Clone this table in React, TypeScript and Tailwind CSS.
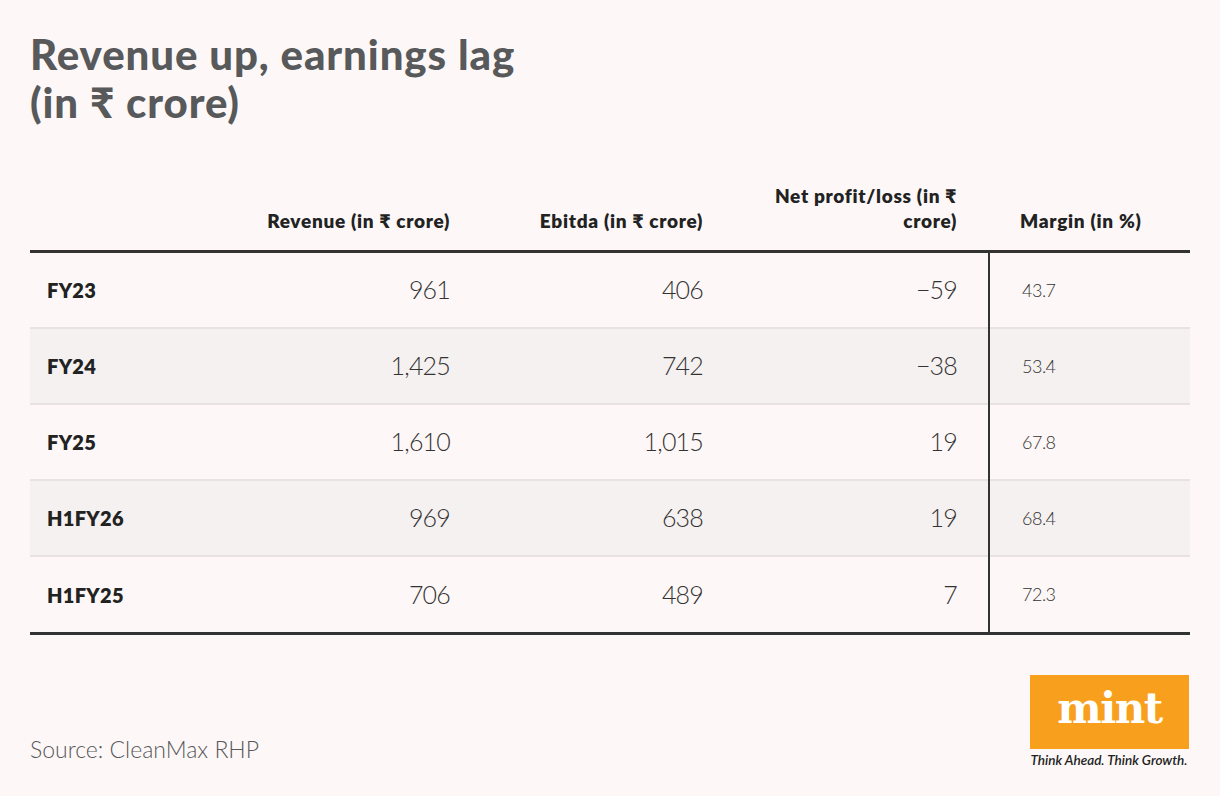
import React from "react";

const rows = [
  { label: "FY23", rev: "961", ebitda: "406", np: "−59", margin: "43.7", alt: false },
  { label: "FY24", rev: "1,425", ebitda: "742", np: "−38", margin: "53.4", alt: true },
  { label: "FY25", rev: "1,610", ebitda: "1,015", np: "19", margin: "67.8", alt: false },
  { label: "H1FY26", rev: "969", ebitda: "638", np: "19", margin: "68.4", alt: true },
  { label: "H1FY25", rev: "706", ebitda: "489", np: "7", margin: "72.3", alt: false },
];

export default function App() {
  return (
    <div
      className="w-[1220px] h-[796px] bg-[#fdf8f7] overflow-hidden pl-[30px]"
      style={{ fontFamily: "Lato, 'Open Sans', sans-serif" }}
    >
      <h1 className="pt-[30px] text-[42px] leading-[48px] font-black text-[#58595b] tracking-[0.9px]">
        Revenue up, earnings lag
        <br />
        (in ₹ crore)
      </h1>

      <div className="w-[1160px]">
        {/* header */}
        <div className="grid grid-cols-[198px_253px_253px_254px_202px] h-[124px] items-end pb-[17px] text-[19px] leading-[25px] font-extrabold text-[#222] tracking-[0.7px]">
          <div />
          <div className="text-right pr-[31px]">Revenue (in ₹ crore)</div>
          <div className="text-right pr-[31px]">Ebitda (in ₹ crore)</div>
          <div className="text-right pr-[31px] pl-[15px]">Net profit/loss (in ₹ crore)</div>
          <div className="pl-[32px]">Margin (in %)</div>
        </div>
        <div className="h-[3px] bg-[#333]" />

        {/* body */}
        <div className="flex">
          <div className="w-[958px]">
            {rows.map((r, i) => (
              <div
                key={r.label}
                className={`grid grid-cols-[198px_253px_253px_254px] items-center ${
                  i < rows.length - 1 ? "h-[76px] border-b-2 border-[#e8e3e2]" : "h-[75px]"
                } ${r.alt ? "bg-[#f5f1f0]" : ""}`}
              >
                <div className="pl-[17px] text-[20px] font-extrabold text-[#222] tracking-[0.3px]">{r.label}</div>
                <div className="text-right pr-[31px] text-[25px] font-light text-[#333] tracking-[-0.8px]">{r.rev}</div>
                <div className="text-right pr-[31px] text-[25px] font-light text-[#333] tracking-[-0.8px]">{r.ebitda}</div>
                <div className="text-right pr-[31px] text-[25px] font-light text-[#333] tracking-[-0.8px]">{r.np}</div>
              </div>
            ))}
          </div>
          <div className="w-[202px] border-l-2 border-[#333]">
            {rows.map((r, i) => (
              <div
                key={r.label}
                className={`flex items-center pl-[32px] ${
                  i < rows.length - 1 ? "h-[76px] border-b-2 border-[#e8e3e2]" : "h-[75px]"
                } ${r.alt ? "bg-[#f5f1f0]" : ""} text-[18px] font-light text-[#333] tracking-[-0.5px]`}
              >
                {r.margin}
              </div>
            ))}
          </div>
        </div>
        <div className="h-[3px] bg-[#333]" />

        {/* footer */}
        <div className="flex justify-between items-start pt-[40px]">
          <div className="mt-[61px] text-[23px] leading-[26px] font-light text-[#58595b] tracking-[0px]">
            Source: CleanMax RHP
          </div>
          <div className="flex flex-col items-end mr-[1px]">
            <div className="w-[159px] h-[74px] bg-[#f99f1e] flex items-center justify-center">
              <span
                className="text-white font-bold text-[42px] leading-none tracking-[-1.5px] pb-[6px]"
                style={{ fontFamily: "'DejaVu Serif', serif" }}
              >
                mint
              </span>
            </div>
            <div className="mt-[3px] w-[160px] text-[13.5px] leading-[16px] italic font-semibold text-[#222] tracking-[0px] text-center">
              Think Ahead. Think Growth.
            </div>
          </div>
        </div>
      </div>
    </div>
  );
}
